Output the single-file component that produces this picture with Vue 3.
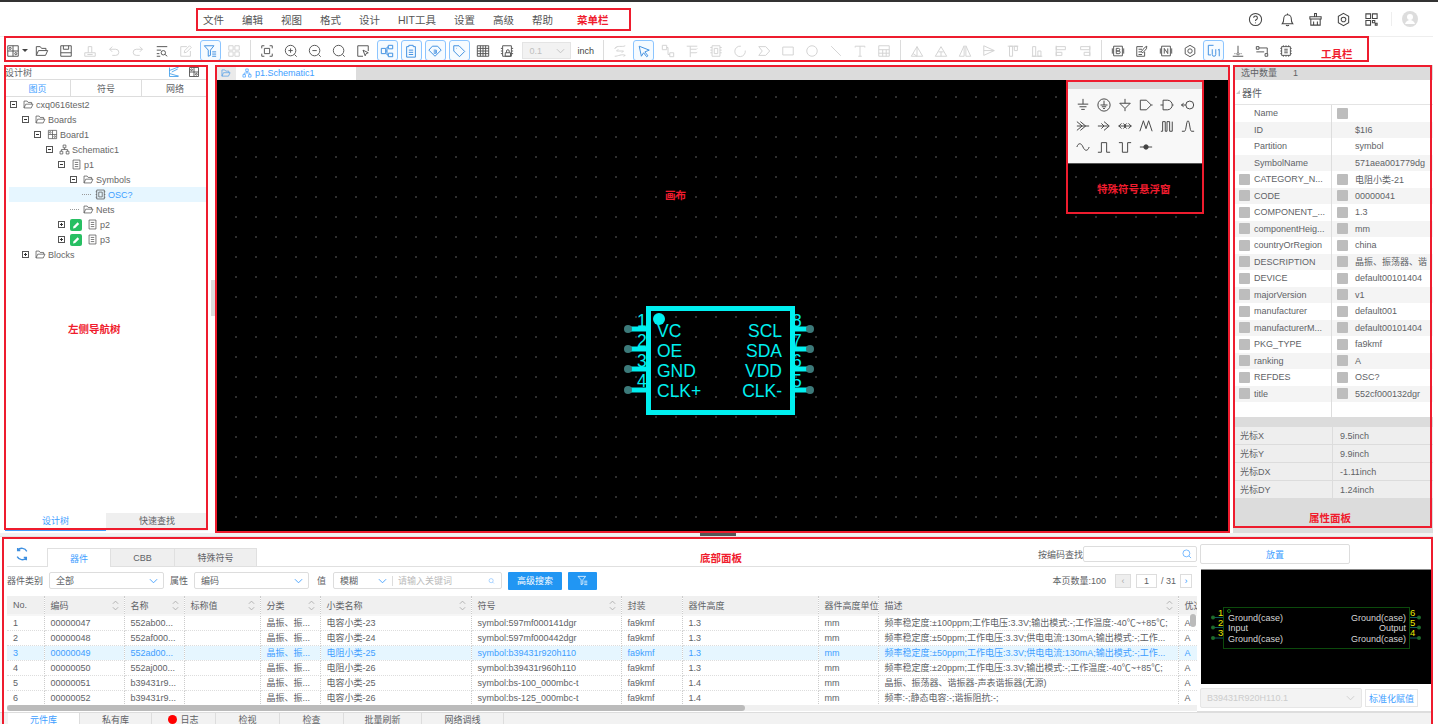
<template>
  <div class="page">
    <div class="app">
      <div class="menubar">
        <span v-for="m in menus" :key="m" class="menu-item">{{ m }}</span>
        <div class="menu-right">
          <Ic n="help" class="mr-ic" />
          <Ic n="bell" class="mr-ic" />
          <Ic n="clean" class="mr-ic" />
          <Ic n="gear" class="mr-ic" />
          <Ic n="apps" class="mr-ic" />
          <i class="mr-sep"></i>
          <div class="avatar">
            <svg viewBox="0 0 16 16"><circle cx="8" cy="6" r="3" /><path d="M3 13c1-3 3-4 5-4s4 1 5 4z" /></svg>
          </div>
        </div>
      </div>

      <div class="toolbar">
        <div class="combo"><Ic n="board" class="tb-ic" /><i class="caret"></i></div>
        <template v-for="(g, gi) in toolGroups" :key="gi">
          <div class="tb-group">
            <div v-for="(t, ti) in g" :key="ti" :class="['tb-btn', t[1]]">
              <Ic :n="t[0]" class="tb-ic" />
            </div>
          </div>
          <template v-if="gi === 1">
            <div class="tb-select"><span>0.1</span><svg viewBox="0 0 10 6"><path d="M1 1l4 4 4-4" /></svg></div>
            <span class="tb-unit">inch</span>
          </template>
          <i v-if="gi < toolGroups.length - 1" class="tb-sep"></i>
        </template>
      </div>

      <div class="main">
        <aside class="left">
          <div class="left-head">
            <span>设计树</span>
            <Ic n="treeLink" class="lh-ic blue" />
            <Ic n="board" class="lh-ic" />
          </div>
          <div class="left-tabs">
            <span class="on">图页</span>
            <span>符号</span>
            <span>网络</span>
          </div>
          <div class="tree">
            <div v-for="r in tree" :key="r.label" :class="['tree-row', { picked: r.picked }]" :style="{ paddingLeft: r.x + 'px' }">
              <i v-if="r.exp" :class="['exp', r.exp]"></i>
              <i v-else class="tree-line"></i>
              <span v-if="r.edit" class="edit-badge">
                <svg viewBox="0 0 12 12"><path d="M3 9.5l.6-2.2 4-4 1.6 1.6-4 4z" /></svg>
              </span>
              <Ic :n="r.icon" class="tree-ic" />
              <span class="tree-label">{{ r.label }}</span>
            </div>
          </div>
          <div class="left-foot">
            <span class="on">设计树</span>
            <span>快速查找</span>
          </div>
        </aside>

        <div class="gutter"><i class="handle"></i></div>

        <section class="center">
          <div class="doc-tabs">
            <div class="doc-folder"><Ic n="folder" class="doc-ic" /></div>
            <div class="doc-tab"><Ic n="schem" class="doc-ic" /><span>p1.Schematic1</span></div>
          </div>
          <div class="canvas">
            <svg class="chip" viewBox="0 0 220 130">
              <g class="chip-pins">
                <path v-for="y in [39, 59, 79, 100]" :key="'l' + y" :d="`M28 ${y}H50`" />
                <path v-for="y in [39, 59, 79, 100]" :key="'r' + y" :d="`M192 ${y}H210`" />
              </g>
              <g class="chip-ends">
                <circle v-for="y in [39, 59, 79, 100]" :key="'cl' + y" cx="28" :cy="y" r="4" />
                <circle v-for="y in [39, 59, 79, 100]" :key="'cr' + y" cx="210" :cy="y" r="4" />
              </g>
              <rect class="chip-body" x="48.5" y="18.5" width="144" height="104" />
              <circle class="chip-dot" cx="59" cy="29" r="6" />
              <g class="chip-text">
                <text v-for="(t, i) in ['1', '2', '3', '4']" :key="t" x="37" :y="37 + i * 20">{{ t }}</text>
                <text v-for="(t, i) in ['8', '7', '6', '5']" :key="t" x="192" :y="37 + i * 20">{{ t }}</text>
                <text v-for="(t, i) in ['VC', 'OE', 'GND', 'CLK+']" :key="t" x="57" :y="47 + i * 20">{{ t }}</text>
                <text v-for="(t, i) in ['SCL', 'SDA', 'VDD', 'CLK-']" :key="t" x="182" :y="47 + i * 20" text-anchor="end">{{ t }}</text>
              </g>
            </svg>
            <div class="float-win">
              <div class="float-head"></div>
              <div class="float-body">
                <Ic v-for="s in symbols" :key="s" :n="s" class="sym-ic" />
              </div>
            </div>
          </div>
        </section>

        <div class="gutter small"></div>

        <aside class="right">
          <div class="sel-count"><span>选中数量</span><span class="sel-num">1</span></div>
          <div class="prop-title"><i class="tri"></i>器件</div>
          <div class="prop-list">
            <div v-for="p in propRows" :key="p[0]" class="prop-row">
              <div class="prop-l"><i v-if="p[2]" class="chk"></i><span>{{ p[0] }}</span></div>
              <div class="prop-r"><i v-if="p[3]" class="chk"></i><span>{{ p[1] }}</span></div>
            </div>
            <div class="prop-fill"><div></div></div>
          </div>
          <div class="cursor-strip"></div>
          <div class="cursor-table">
            <div v-for="c in cursorRows" :key="c[0]" class="cursor-row">
              <span>{{ c[0] }}</span><span>{{ c[1] }}</span>
            </div>
          </div>
          <div class="right-fill"></div>
        </aside>
      </div>

      <div class="split"><i></i></div>

      <div class="bottom">
        <div class="lib">
          <div class="lib-col">
            <div class="lib-tabs">
              <Ic n="refresh" class="refresh" />
              <span class="lib-tab on">器件</span>
              <span class="lib-tab">CBB</span>
              <span class="lib-tab wide">特殊符号</span>
              <div class="find">
                <span>按编码查找</span>
                <div class="find-box"><Ic n="search" class="find-ic" /></div>
              </div>
            </div>

            <div class="filters">
              <span>器件类别</span>
              <div class="sel w115"><span>全部</span><svg viewBox="0 0 10 6"><path d="M1 1l4 4 4-4" /></svg></div>
              <span>属性</span>
              <div class="sel w115"><span>编码</span><svg viewBox="0 0 10 6"><path d="M1 1l4 4 4-4" /></svg></div>
              <span class="val">值</span>
              <div class="sel w170">
                <span class="mode">模糊</span>
                <svg viewBox="0 0 10 6"><path d="M1 1l4 4 4-4" /></svg>
                <i class="sel-sep"></i>
                <span class="ph">请输入关键词</span>
                <Ic n="search" class="find-ic" />
              </div>
              <div class="btn-blue">高级搜索</div>
              <div class="btn-blue icon"><Ic n="filter" class="btn-ic" /></div>
              <div class="pager">
                <span>本页数量:100</span>
                <i class="pg-btn off">‹</i>
                <i class="pg-num">1</i>
                <span class="pg-total">/ 31</span>
                <i class="pg-btn">›</i>
              </div>
            </div>

            <div class="table-wrap">
              <table>
                <colgroup>
                  <col v-for="c in columns" :key="c.t" :style="{ width: c.w + 'px' }" />
                </colgroup>
                <thead>
                  <tr>
                    <th v-for="c in columns" :key="c.t">
                      {{ c.t }}
                      <svg v-if="c.s" class="sort" viewBox="0 0 8 14"><path d="M1 5l3-3 3 3M1 9l3 3 3-3" /></svg>
                    </th>
                  </tr>
                </thead>
                <tbody>
                  <tr v-for="(r, i) in rows" :key="r[1]" :class="{ cur: i === 2 }">
                    <td v-for="(v, j) in r" :key="j">{{ v }}</td>
                  </tr>
                </tbody>
              </table>
              <i class="v-thumb"></i>
              <div class="h-track"><i></i></div>
            </div>
          </div>

          <div class="preview-col">
            <div class="place-btn">放置</div>
            <div class="preview">
              <svg viewBox="0 0 230 115">
                <rect class="pv-body" x="22.5" y="37.5" width="186" height="41" />
                <circle class="pv-o" cx="28" cy="41" r="1.5" />
                <g v-for="y in [47.5, 57.5, 68]" :key="y">
                  <path class="pv-pin" :d="`M12 ${y}H22M209 ${y}H218`" />
                  <circle class="pv-end" cx="12" :cy="y" r="2" />
                  <circle class="pv-end" cx="218" :cy="y" r="2" />
                </g>
                <g class="pv-num">
                  <text x="17" y="46">1</text><text x="17" y="56">2</text><text x="17" y="66">3</text>
                  <text x="209" y="46">6</text><text x="209" y="56">5</text><text x="209" y="66">4</text>
                </g>
                <g class="pv-text">
                  <text x="27" y="51">Ground(case)</text>
                  <text x="27" y="61">Input</text>
                  <text x="27" y="72">Ground(case)</text>
                  <text x="205" y="51" text-anchor="end">Ground(case)</text>
                  <text x="205" y="61" text-anchor="end">Output</text>
                  <text x="205" y="72" text-anchor="end">Ground(case)</text>
                </g>
              </svg>
            </div>
            <div class="pv-foot">
              <div class="pv-sel"><span>B39431R920H110.1</span><svg viewBox="0 0 10 6"><path d="M1 1l4 4 4-4" /></svg></div>
              <div class="pv-btn">标准化赋值</div>
            </div>
          </div>
        </div>

        <div class="foot-tabs">
          <span class="on">元件库</span>
          <span>私有库</span>
          <span><i class="dot"></i>日志</span>
          <span>检视</span>
          <span>检查</span>
          <span class="w78">批量刷新</span>
          <span class="w82">网络调线</span>
        </div>
      </div>
    </div>

    <!-- 标注 -->
    <i class="box b-menu"></i>
    <i class="box b-tool"></i>
    <i class="box b-left"></i>
    <i class="box b-canvas"></i>
    <i class="box b-float"></i>
    <i class="box b-right"></i>
    <i class="box b-bottom"></i>
    <span class="note n-menu">菜单栏</span>
    <span class="note n-tool">工具栏</span>
    <span class="note n-left">左侧导航树</span>
    <span class="note n-canvas">画布</span>
    <span class="note n-float">特殊符号悬浮窗</span>
    <span class="note n-right">属性面板</span>
    <span class="note n-bottom">底部面板</span>
  </div>
</template>

<script setup>
import { h } from 'vue'

const paths = {
  help: 'M8 1.5a6.5 6.5 0 1 0 0 13a6.5 6.5 0 1 0 0-13 M6 6.2a2 2 0 1 1 3 1.8c-.7.4-1 .8-1 1.6 M8 11.2v.8',
  bell: 'M2.5 12.5c1-1 1.5-2 1.5-5.5a4 4 0 0 1 8 0c0 3.5.5 4.5 1.5 5.5z M6.5 14c.5.8 2.5.8 3 0 M8 1.5v1.5',
  clean: 'M7 1.5h2v3.5H7z M2 5h12v2.5H2z M3 7.5V14h10V7.5 M6 10v4 M10 10v4',
  gear: 'M8 1.5l5.5 3.2v6.6L8 14.5l-5.5-3.2V4.7z M8 5.5a2.5 2.5 0 1 0 0 5a2.5 2.5 0 1 0 0-5',
  apps: 'M2 2h5v5H2z M9 2h5v5H9z M2 9h5v5H2z M9 9h2.5v2.5H9z M12 12h2v2h-2z',
  board: 'M2 2h12v12H2z M8 2v12 M2 8h12 M3.5 5a1.2 1.2 0 1 0 2.4 0a1.2 1.2 0 1 0-2.4 0 M10 11a1.2 1.2 0 1 0 2.4 0a1.2 1.2 0 1 0-2.4 0',
  folder: 'M1.5 13V3h4.5l1.5 2h5v2.5 M1.5 13l2.5-5.5h10.5L12 13z',
  save: 'M2 2h12v12H2z M5 2v4h6V2 M2 10h12',
  stamp: 'M2 14h12v-4H2z M6 10V3h4v7 M5 12h6',
  undo: 'M3 6h7a3.5 3.5 0 0 1 0 7H6 M3 6l3-3 M3 6l3 3',
  redo: 'M13 6H6a3.5 3.5 0 0 0 0 7h4 M13 6l-3-3 M13 6l-3 3',
  findList: 'M2 3h12 M2 7h5 M2 11h3 M2 14h4 M7 10a2.5 2.5 0 1 0 5 0a2.5 2.5 0 1 0-5 0 M11.5 12l2.5 2',
  editDoc: 'M13 8v6H2V3h7 M6 10l.5-2.5L12 2l2 2-5.5 5.5z',
  filter: 'M1.5 2h11L8.5 7v6L6 14V7z M10.5 9H15 M10.5 11.5H15 M10.5 14H15',
  grid4: 'M2 2h5v5H2z M9 2h5v5H9z M2 9h5v5H2z M9 9h5v5H9z',
  fit: 'M2 5V2h3 M11 2h3v3 M14 11v3h-3 M5 14H2v-3 M5 5h6v6H5z',
  zoomIn: 'M7.5 1.5a6 6 0 1 0 0 12a6 6 0 1 0 0-12 M12 12l2.5 2.5 M5 7.5h5 M7.5 5v5',
  zoomOut: 'M7.5 1.5a6 6 0 1 0 0 12a6 6 0 1 0 0-12 M12 12l2.5 2.5 M5 7.5h5',
  zoom: 'M7.5 1.5a6 6 0 1 0 0 12a6 6 0 1 0 0-12 M12 12l2.5 2.5',
  areaSel: 'M14 8V2H2v12h6 M8 7l6 3-2.5 1-1 2.5z',
  hier: 'M1.5 5h5v6h-5z M9.5 1.5h5v4h-5z M9.5 10.5h5v4h-5z M6.5 8H8 M8 3.5V12.5 M8 3.5h1.5 M8 12.5h1.5',
  clip: 'M3 3h2.5V1.5h5V3H13v12H3z M5.5 7h5 M5.5 9.5h5 M5.5 12h5',
  tagS: 'M5 2.5h6L15 7l-7 7-7-7z M6.5 7h3v2h-3 M9.5 9v1.5h-3',
  tag: 'M2 2h6l6.5 6.5-6 6L2 8z M5 5h.5',
  table: 'M1.5 2h13v12h-13z M1.5 5h13 M1.5 8h13 M1.5 11h13 M5 2v12 M8 2v12 M11 2v12',
  chipLock: 'M3 2h10v12H3z M1 5h2 M1 8h2 M1 11h2 M13 5h2 M13 8h2 M13 11h2 M6 10h6v4H6z M7.5 10V8a1.5 1.5 0 0 1 3 0v2',
  route: 'M2 5c3-4 8-1 12-3 M2 14c4 0 8-3 12-1 M4 8h8 M4 8l2-2 M12 8l-2 2 M2 5l2-1 M14 13l-2 1',
  cursor: 'M2.5 2.5L14 7l-5 2 3.5 4.5-1.5 1L7.5 10 5 14z',
  conn: 'M1.5 1.5h5v5h-5z M10 10h4.5v4.5H10z M6.5 4H8v8h2',
  bus: 'M2 2.5h12 M6 2.5V15 M6 6h7 M6 10h7 M13 6l1-1 M13 10l1-1',
  chipSq: 'M3.5 2h9v12h-9z M6 5h4v6H6z M1.5 4h2 M1.5 7h2 M1.5 10h2 M12.5 4h2 M12.5 7h2 M12.5 10h2',
  arc: 'M9 2.5a6 6 0 1 0 5 5',
  port: 'M2 3h8l4.5 5-4.5 5H2l4-5z',
  rect: 'M2 3.5h12v9H2z',
  circle: 'M8 2a6 6 0 1 0 0 12a6 6 0 1 0 0-12',
  line: 'M2.5 2.5l11 11',
  tee: 'M2.5 4V2.5h11V4 M8 2.5V14 M6 14h4',
  tableS: 'M2 2h12v12H2z M2 6.5h12 M2 10.5h12 M6.5 6.5V14 M10.5 6.5V14',
  al1: 'M1.5 14L8 3l6.5 11z M8 3v11 M3.5 11l4.5 3',
  al2: 'M1.5 14L8 3l6.5 11z M5 9h6 M8 14v-5',
  al3: 'M7 2v12L1.5 14z M9 2v12l5.5 0z',
  al4: 'M2 2l12 5.5L2 13z M2 7.5h12',
  al5: 'M2 2.5h12 M4 2.5h3.5V14H4z M9.5 2.5H13v5H9.5z',
  al6: 'M2 14h12 M3 3h3.5v11H3z M9 8h3.5v6H9z',
  al7: 'M2.5 2v12 M2.5 3H13v3.5H2.5z M2.5 9.5H9V13H2.5z',
  al8: 'M13.5 2v12 M13.5 3H3v3.5h10.5z M13.5 9.5H7V13h6.5z',
  docB: 'M3 2.5h10v11H3z M1.5 5v6 M14.5 5v6 M6 5h2.5a1.2 1.2 0 0 1 0 3H6z M6 8h3a1.3 1.3 0 0 1 0 3H6z',
  docEdit: 'M11 9v5H2V3h7 M4 6h4 M4 9h3 M4 12h4 M7 9l4-5 2.5-1.5L13 5.5l-4 4.5z',
  docN: 'M3 2.5h10v11H3z M1.5 5v6 M14.5 5v6 M6 11V5l4 6V5',
  uOne: 'M1.5 1.5h6M1.5 1.5v11h3 M6 6v6a2 2 0 0 0 4 0V6 M12.5 7l1.5-1v8',
  pinDown: 'M8 2v8 M2 14h12 M4 11h1 M11 11h1 M8 10a1.3 1.3 0 1 0 .1 0',
  wires: 'M1.5 3h3v3h-3z M4.5 4.5H14V11 M11.5 11h3v3h-3z M1.5 9h9',
  chipDash: 'M3 3h10v10H3z M1.5 5h1.5 M1.5 8h1.5 M1.5 11h1.5 M13 5h1.5 M13 8h1.5 M13 11h1.5 M5 1.5V3 M8 1.5V3 M11 1.5V3 M5 13v1.5 M8 13v1.5 M11 13v1.5 M6 6h4 M6 8h4 M6 10h4',
  treeLink: 'M2 2v12h12 M2 6l10-4 M2 10l10 3 M5 8l8-4 M12 2h2 M12 13h2',
  schem: 'M6 1.5h4v4H6z M1.5 10.5h4v4h-4z M10.5 10.5h4v4h-4z M8 5.5V8 M3.5 10.5V8h9v2.5',
  doc: 'M3 1.5h10v13H3z M5.5 5h5 M5.5 8h5 M5.5 11h5',
  chipDoc: 'M2.5 1.5h11v13h-11z M5.5 4.5h5v7h-5z M1 4h1.5 M1 8h1.5 M1 12h1.5 M13.5 4H15 M13.5 8H15 M13.5 12H15',
  search: 'M7 1.5a5.5 5.5 0 1 0 0 11a5.5 5.5 0 1 0 0-11 M11 11l3.5 3.5',
  refresh: 'M13.5 5A6.5 6.5 0 0 0 3 3.5 M2.5 11a6.5 6.5 0 0 0 10.5 1.5 M3 1v3h3 M13 15v-3h-3',
  s1: 'M8 1v6 M2 7h12 M4 10h8 M6 13h4',
  s2: 'M8 1a7 7 0 1 0 0 14a7 7 0 1 0 0-14 M8 3v5 M4 8h8 M5.5 10h5 M7 12h2',
  s3: 'M8 1v5 M2 6h12L8 12z M8 12v3',
  s4: 'M1.5 2.5h7L14 8l-5.5 5.5h-7z M14 8h1.5',
  s5: 'M3.5 2.5h5a5.5 5.5 0 0 1 0 11h-5z M.5 8h3 M14 8h1.5',
  s6: 'M10 3.5a4.5 4.5 0 1 0 0 9a4.5 4.5 0 1 0 0-9 M.5 8h5 M3 6L.5 8 3 10',
  s7: 'M1 3l6 5-6 5 M5 3l6 5-6 5 M1 8h14',
  s8: 'M1 8h12 M8 3l6 5-6 5 M5 5l3 3-3 3',
  s9: 'M.5 8h15 M4 5L1 8l3 3 M12 5l3 3-3 3 M6 5l3 3-3 3 M10 5L7 8l3 3',
  s10: 'M1 14L5 2l3 9 3-9 4 12',
  s11: 'M1 14h2V3h3v11h2V3h3v11h3V3',
  s12: 'M1 14h3c2 0 2-12 4-12s2 12 4 12h3',
  s13: 'M1 8c1.5-5 5-5 7 0s5.5 5 7 0',
  s14: 'M1 14h4V3h6v11h4',
  s15: 'M1 3h4v11h6V3h4',
  s16: 'M1 8h14 M5.5 8a2.5 2.5 0 1 0 5 0a2.5 2.5 0 1 0-5 0'
}

// маленькая обёртка для иконок
const Ic = (p) => h('svg', { viewBox: '0 0 16 16', class: 'ic' }, [h('path', { d: paths[p.n] })])
Ic.props = ['n']

const menus = ['文件', '编辑', '视图', '格式', '设计', 'HIT工具', '设置', '高级', '帮助']

const toolGroups = [
  [['folder'], ['save'], ['stamp', 'dis'], ['undo', 'dis'], ['redo', 'dis'], ['findList'], ['editDoc', 'dis'], ['filter', 'act'], ['grid4', 'dis']],
  [['fit'], ['zoomIn'], ['zoomOut'], ['zoom'], ['areaSel'], ['hier', 'act'], ['clip', 'act'], ['tagS', 'act'], ['tag', 'act'], ['table'], ['chipLock']],
  [['route', 'dis'], ['cursor', 'act'], ['conn', 'dis'], ['bus', 'dis'], ['chipSq', 'dis'], ['arc', 'dis'], ['port', 'dis'], ['rect', 'dis'], ['circle', 'dis'], ['line', 'dis'], ['tee', 'dis'], ['tableS', 'dis']],
  [['al1', 'dis'], ['al2', 'dis'], ['al3', 'dis'], ['al4', 'dis'], ['al5', 'dis'], ['al6', 'dis'], ['al7', 'dis'], ['al8', 'dis']],
  [['docB'], ['docEdit'], ['docN'], ['gear'], ['uOne', 'act'], ['pinDown'], ['wires'], ['chipDash']]
]

const tree = [
  { label: 'cxq0616test2', x: 10, exp: 'minus', icon: 'folder' },
  { label: 'Boards', x: 22, exp: 'minus', icon: 'folder' },
  { label: 'Board1', x: 34, exp: 'minus', icon: 'board' },
  { label: 'Schematic1', x: 46, exp: 'minus', icon: 'schem' },
  { label: 'p1', x: 58, exp: 'minus', icon: 'doc' },
  { label: 'Symbols', x: 70, exp: 'minus', icon: 'folder' },
  { label: 'OSC?', x: 82, icon: 'chipDoc', picked: true },
  { label: 'Nets', x: 70, icon: 'folder' },
  { label: 'p2', x: 58, exp: 'plus', icon: 'doc', edit: true },
  { label: 'p3', x: 58, exp: 'plus', icon: 'doc', edit: true },
  { label: 'Blocks', x: 22, exp: 'plus', icon: 'folder' }
]

const symbols = ['s1', 's2', 's3', 's4', 's5', 's6', 's7', 's8', 's9', 's10', 's11', 's12', 's13', 's14', 's15', 's16']

const propRows = [
  ['Name', '', false, true],
  ['ID', '$1I6', false, false],
  ['Partition', 'symbol', false, false],
  ['SymbolName', '571aea001779dg', false, false],
  ['CATEGORY_N...', '电阻小类-21', true, true],
  ['CODE', '00000041', true, true],
  ['COMPONENT_...', '1.3', true, true],
  ['componentHeig...', 'mm', true, true],
  ['countryOrRegion', 'china', true, true],
  ['DESCRIPTION', '晶振、振荡器、谐', true, true],
  ['DEVICE', 'default00101404', true, true],
  ['majorVersion', 'v1', true, true],
  ['manufacturer', 'default001', true, true],
  ['manufacturerM...', 'default00101404', true, true],
  ['PKG_TYPE', 'fa9kmf', true, true],
  ['ranking', 'A', true, true],
  ['REFDES', 'OSC?', true, true],
  ['title', '552cf000132dgr', true, true]
]

const cursorRows = [
  ['光标X', '9.5inch'],
  ['光标Y', '9.9inch'],
  ['光标DX', '-1.11inch'],
  ['光标DY', '1.24inch']
]

const columns = [
  { t: 'No.', w: 37 },
  { t: '编码', w: 80, s: true },
  { t: '名称', w: 60, s: true },
  { t: '标称值', w: 76, s: true },
  { t: '分类', w: 60, s: true },
  { t: '小类名称', w: 151, s: true },
  { t: '符号', w: 150, s: true },
  { t: '封装', w: 61 },
  { t: '器件高度', w: 136 },
  { t: '器件高度单位', w: 60 },
  { t: '描述', w: 300, s: true },
  { t: '优选', w: 30 }
]

const descA = '频率稳定度:±50ppm;工作电压:3.3V;供电电流:130mA;输出模式:-;工作...'
const rows = [
  ['1', '00000047', '552ab00...', '', '晶振、振...', '电容小类-23', 'symbol:597mf000141dgr', 'fa9kmf', '1.3', 'mm', '频率稳定度:±100ppm;工作电压:3.3V;输出模式:-;工作温度:-40℃~+85℃;', 'A'],
  ['2', '00000048', '552af000...', '', '晶振、振...', '电容小类-24', 'symbol:597mf000442dgr', 'fa9kmf', '1.3', 'mm', descA, 'A'],
  ['3', '00000049', '552ad00...', '', '晶振、振...', '电阻小类-25', 'symbol:b39431r920h110', 'fa9kmf', '1.3', 'mm', descA, 'A'],
  ['4', '00000050', '552aj000...', '', '晶振、振...', '电阻小类-26', 'symbol:b39431r960h110', 'fa9kmf', '1.3', 'mm', '频率稳定度:±20ppm;工作电压:3.3V;输出模式:-;工作温度:-40℃~+85℃;', 'A'],
  ['5', '00000051', 'b39431r9...', '', '晶振、振...', '电容小类-25', 'symbol:bs-100_000mbc-t', 'fa9kmf', '1.4', 'mm', '晶振、振荡器、谐振器-声表谐振器(无源)', 'A'],
  ['6', '00000052', 'b39431r9...', '', '晶振、振...', '电容小类-26', 'symbol:bs-125_000mbc-t', 'fa9kmf', '1.4', 'mm', '频率:-;静态电容:-;谐振阻抗:-;', 'A']
]
</script>

<style>
html, body {
  margin: 0;
  background: #fff;
  overflow: hidden;
}
</style>

<style scoped>
.page {
  position: relative;
  width: 1438px;
  height: 724px;
  overflow: hidden;
  background: #fff;
  border-top: 2px solid #333;
  box-sizing: border-box;
  font-family: "Liberation Sans", "Noto Sans CJK SC", sans-serif;
  font-size: 9px;
  color: #606266;
}

i {
  font-style: normal;
}

.app {
  width: 1433px;
  height: 722px;
  display: flex;
  flex-direction: column;
}

.ic {
  fill: none;
  stroke: currentColor;
  stroke-width: 1.1;
  display: block;
}

/* меню */
.menubar {
  height: 34px;
  flex: none;
  display: flex;
  align-items: center;
  padding: 0 15px 0 203px;
  font-size: 10.5px;
  color: #555;
}

.menu-item {
  margin-right: 18px;
}

.menu-right {
  margin-left: auto;
  display: flex;
  align-items: center;
  color: #444;
}

.mr-ic {
  width: 15px;
  height: 15px;
  margin-left: 13px;
}

.mr-ic:first-child {
  margin-right: 4px;
}

.mr-sep {
  width: 1px;
  height: 14px;
  background: #eee;
  margin: 0 10px 0 12px;
}

.avatar {
  width: 16px;
  height: 16px;
  border-radius: 50%;
  background: #ddd;
  overflow: hidden;
}

.avatar svg {
  display: block;
  fill: #fff;
}

/* тулбар */
.toolbar {
  height: 28px;
  flex: none;
  display: flex;
  align-items: center;
  border-top: 1px solid #eee;
  box-sizing: border-box;
  color: #555;
}

.combo {
  width: 23px;
  margin: 0 2.5px 0 6px;
  display: flex;
  align-items: center;
}

.caret {
  width: 0;
  height: 0;
  margin-left: 2px;
  border: 3px solid transparent;
  border-top: 3px solid #444;
  border-bottom: 0;
}

.tb-group {
  display: flex;
  gap: 3px;
}

.tb-btn {
  width: 21px;
  height: 21px;
  box-sizing: border-box;
  border: 1px solid transparent;
  border-radius: 3px;
  display: flex;
  align-items: center;
  justify-content: center;
}

.tb-btn.dis {
  color: #d2d2d2;
}

.tb-btn.act {
  border-color: #8cc5ff;
  background: #f6fbff;
  color: #3d8fe0;
}

.tb-ic {
  width: 14px;
  height: 14px;
}

.tb-sep {
  width: 1px;
  height: 21px;
  background: #dcdcdc;
  margin: 0 5.5px;
}

.tb-select {
  width: 49px;
  height: 17px;
  margin-left: 4px;
  padding: 0 5px 0 7px;
  box-sizing: border-box;
  display: flex;
  align-items: center;
  justify-content: space-between;
  background: #f2f2f2;
  border: 1px solid #e4e4e4;
  color: #c0c0c0;
}

.tb-select svg {
  width: 9px;
  height: 6px;
  fill: none;
  stroke: #c0c0c0;
}

.tb-unit {
  width: 16px;
  margin: 0 3.5px 0 7px;
  color: #444;
}

/* основная область */
.main {
  flex: 1;
  min-height: 0;
  display: flex;
  padding-top: 1px;
}

.left {
  width: 208px;
  flex: none;
  padding: 0 0 4px 5px;
  box-sizing: border-box;
  display: flex;
  flex-direction: column;
}

.left-head {
  height: 14px;
  flex: none;
  display: flex;
  align-items: center;
}

.left-head span {
  flex: 1;
}

.lh-ic {
  width: 12px;
  height: 12px;
  margin-right: 8px;
  color: #444;
}

.lh-ic.blue {
  color: #3d9be9;
}

.left-tabs {
  height: 18px;
  flex: none;
  display: grid;
  grid-template-columns: 65px 71px 1fr;
  border-top: 1px solid #ddd;
  border-bottom: 1px solid #ddd;
  box-sizing: border-box;
}

.left-tabs span {
  display: flex;
  align-items: center;
  justify-content: center;
  border-left: 1px solid #ddd;
}

.left-tabs span:first-child {
  border-left: 0;
}

.left-tabs .on {
  color: #409eff;
}

.tree {
  flex: 1;
  color: #666;
}

.tree-row {
  position: relative;
  height: 15px;
  display: flex;
  align-items: center;
  margin-left: -5px;
}

.tree-row.picked {
  color: #409eff;
}

.tree-row.picked::before {
  content: "";
  position: absolute;
  left: 9px;
  right: 0;
  top: 0;
  bottom: 0;
  background: #e6f6ff;
}

.tree-row > * {
  position: relative;
}

.exp {
  width: 7px;
  height: 7px;
  flex: none;
  margin-right: 5.5px;
  box-sizing: border-box;
  border: 1px solid #555;
  background: linear-gradient(#333, #333) center / 3px 1px no-repeat #fff;
}

.exp::before {
  content: "";
  position: absolute;
  left: 2px;
  top: -5px;
  height: 15px;
  border-left: 1px dotted #aaa;
  z-index: -1;
}

.exp.plus {
  background:
    linear-gradient(#333, #333) center / 3px 1px no-repeat,
    linear-gradient(#333, #333) center / 1px 3px no-repeat,
    #fff;
}

.tree-line {
  width: 9px;
  height: 1px;
  flex: none;
  margin-right: 3.5px;
  border-top: 1px dotted #999;
}

.tree-ic {
  width: 11px;
  height: 11px;
  flex: none;
  margin-right: 2.5px;
  color: #555;
}

.tree-label {
  white-space: nowrap;
}

.edit-badge {
  width: 12px;
  height: 12px;
  flex: none;
  margin: 0 4.5px 0 -.5px;
  background: #27bf63;
  border-radius: 2px;
}

.edit-badge svg {
  display: block;
  fill: #fff;
}

.left-foot {
  height: 16px;
  flex: none;
  display: grid;
  grid-template-columns: 101px 1fr;
  text-align: center;
  line-height: 16px;
}

.left-foot span {
  background: #efefef;
}

.left-foot .on {
  background: #fff;
  color: #409eff;
  border-bottom: 2px solid #409eff;
}

.gutter {
  width: 7px;
  flex: none;
  position: relative;
}

.gutter.small {
  width: 3px;
}

.handle {
  position: absolute;
  left: 3px;
  top: 215px;
  width: 4px;
  height: 36px;
  background: #dcdcdc;
}

.center {
  flex: 1;
  min-width: 0;
  display: flex;
  flex-direction: column;
  padding-bottom: 2px;
}

.doc-tabs {
  height: 15px;
  flex: none;
  display: flex;
  background: #dcdcdc;
}

.doc-folder {
  width: 21px;
  display: flex;
  align-items: center;
  justify-content: center;
  background: #eaeaea;
  color: #4a9ae8;
}

.doc-tab {
  width: 120px;
  background: #fff;
  display: flex;
  align-items: center;
  gap: 3px;
  padding-left: 6px;
  box-sizing: border-box;
  color: #409eff;
}

.doc-ic {
  width: 10px;
  height: 10px;
}

.canvas {
  position: relative;
  flex: 1;
  background-color: #000;
  background-image: radial-gradient(circle at center, #4a4a4a 0.6px, transparent 0.9px);
  background-size: 20px 20px;
  background-position: -9px 7px;
}

.chip {
  position: absolute;
  left: 385px;
  top: 210px;
  width: 220px;
  height: 130px;
}

.chip-pins path {
  stroke: #00f0f0;
  stroke-width: 5;
}

.chip-ends circle {
  fill: #3c7a7a;
}

.chip-body {
  fill: none;
  stroke: #00f0f0;
  stroke-width: 5;
}

.chip-dot {
  fill: #00f0f0;
}

.chip-text text {
  fill: #00f0f0;
  font-size: 17.5px;
}

.float-win {
  position: absolute;
  left: 853px;
  top: 1px;
  width: 134px;
  height: 83px;
  background: #f8f8f8;
  border-bottom: 1px solid #555;
  box-sizing: border-box;
}

.float-head {
  height: 8px;
  background: #d9d9d9;
}

.float-body {
  display: grid;
  grid-template-columns: repeat(6, 21px);
  grid-auto-rows: 21px;
  padding: 6px 0 0 5px;
  color: #444;
}

.sym-ic {
  width: 14px;
  height: 14px;
  margin: 3px;
}

.sym-ic:last-child {
  fill: currentColor;
}

/* свойства */
.right {
  width: 200px;
  flex: none;
  display: flex;
  flex-direction: column;
}

.sel-count {
  height: 15px;
  flex: none;
  background: #dcdcdc;
  display: flex;
  align-items: center;
  padding-left: 8px;
}

.sel-num {
  margin-left: 16px;
}

.prop-title {
  height: 24px;
  flex: none;
  display: flex;
  align-items: center;
  padding-left: 3px;
  gap: 2px;
  font-size: 10px;
}

.tri {
  width: 0;
  height: 0;
  border-left: 4px solid transparent;
  border-bottom: 4px solid #ccc;
}

.prop-list {
  flex: 1;
  min-height: 0;
  display: flex;
  flex-direction: column;
  border-top: 1px solid #e4e4e4;
}

.prop-row {
  height: 16.5px;
  flex: none;
  display: flex;
}

.prop-row:nth-child(even) {
  background: #f4f4f4;
}

.prop-l {
  width: 99px;
  flex: none;
  display: flex;
  align-items: center;
  padding-left: 21px;
  position: relative;
  box-sizing: border-box;
  border-right: 1px solid #ddd;
  white-space: nowrap;
}

.prop-r {
  flex: 1;
  min-width: 0;
  display: flex;
  align-items: center;
  padding-left: 23px;
  position: relative;
  white-space: nowrap;
  overflow: hidden;
}

.chk {
  position: absolute;
  left: 6px;
  top: 2.5px;
  width: 11px;
  height: 11px;
  border-radius: 1px;
  background: #bdbdbd;
}

.prop-r .chk {
  left: 5px;
}

.prop-fill {
  flex: 1;
}

.prop-fill div {
  width: 99px;
  height: 100%;
  box-sizing: border-box;
  border-right: 1px solid #ddd;
}

.cursor-strip {
  height: 9px;
  flex: none;
  background: #dcdcdc;
}

.cursor-table {
  flex: none;
  background: #eee;
}

.cursor-row {
  height: 18px;
  box-sizing: border-box;
  display: flex;
  align-items: center;
  border-top: 1px solid #dcdcdc;
}

.cursor-row span:first-child {
  width: 100px;
  height: 100%;
  flex: none;
  padding-left: 7px;
  box-sizing: border-box;
  display: flex;
  align-items: center;
  border-right: 1px solid #dcdcdc;
}

.cursor-row span:last-child {
  padding-left: 7px;
}

.right-fill {
  height: 35px;
  flex: none;
  background: #dcdcdc;
}

.split {
  height: 4px;
  flex: none;
  position: relative;
  background: #f2f2f2;
  border-bottom: 1px solid #e4e4e4;
  box-sizing: border-box;
}

.split i {
  position: absolute;
  left: 700px;
  width: 36px;
  height: 3px;
  background: #555;
}

/* нижняя панель */
.bottom {
  height: 187px;
  flex: none;
  display: flex;
  flex-direction: column;
}

.lib {
  height: 175px;
  flex: none;
  display: flex;
}

.lib-col {
  width: 1197px;
  flex: none;
  padding-left: 7px;
  box-sizing: border-box;
  display: flex;
  flex-direction: column;
  overflow: hidden;
}

.lib-tabs {
  height: 30px;
  flex: none;
  display: flex;
  align-items: flex-end;
  border-bottom: 1px solid #e0e0e0;
  box-sizing: border-box;
  position: relative;
}

.refresh {
  width: 14px;
  height: 14px;
  color: #3d8fe0;
  margin: 0 18px 5px 8px;
  stroke-width: 1.5;
}

.lib-tab {
  width: 64px;
  height: 18px;
  box-sizing: border-box;
  display: flex;
  align-items: center;
  justify-content: center;
  background: #efefef;
  border: 1px solid #e0e0e0;
  border-left: 0;
  border-bottom: 0;
}

.lib-tab.on {
  background: #fff;
  color: #409eff;
  margin-bottom: -1px;
  height: 19px;
  border-left: 1px solid #e0e0e0;
}

.lib-tab.wide {
  width: 82px;
}

.find {
  margin-left: auto;
  margin-bottom: 4px;
  display: flex;
  align-items: center;
}

.find-box {
  width: 114px;
  height: 16px;
  box-sizing: border-box;
  border: 1px solid #ddd;
  border-radius: 2px;
  display: flex;
  align-items: center;
  justify-content: flex-end;
  padding-right: 4px;
}

.find-ic {
  width: 10px;
  height: 10px;
  color: #409eff;
  flex: none;
}

.filters {
  height: 17px;
  flex: none;
  margin-top: 5px;
  display: flex;
  align-items: center;
  white-space: nowrap;
}

.sel {
  height: 17px;
  box-sizing: border-box;
  border: 1px solid #ddd;
  border-radius: 2px;
  display: flex;
  align-items: center;
  padding: 0 5px 0 6px;
  margin: 0 6px;
}

.sel svg {
  width: 9px;
  height: 6px;
  fill: none;
  stroke: #409eff;
  flex: none;
  margin-left: auto;
}

.w115 {
  width: 115px;
}

.w170 {
  width: 169px;
  margin: 0 6px 0 7px;
}

.val {
  margin-left: 2px;
}

.w170 svg {
  margin-left: 20px;
}

.sel-sep {
  width: 1px;
  height: 10px;
  background: #ddd;
  margin: 0 5px;
}

.ph {
  color: #bbb;
  flex: 1;
}

.btn-blue {
  width: 54px;
  height: 18px;
  background: #2196f3;
  color: #fff;
  display: flex;
  align-items: center;
  justify-content: center;
  border-radius: 1px;
}

.btn-blue.icon {
  width: 29px;
  margin-left: 6px;
}

.btn-ic {
  width: 11px;
  height: 11px;
}

.pager {
  margin-left: auto;
  margin-right: 5px;
  display: flex;
  align-items: center;
  gap: 5px;
}

.pg-btn {
  width: 12px;
  height: 14px;
  box-sizing: border-box;
  border: 1px solid #ddd;
  display: flex;
  align-items: center;
  justify-content: center;
  color: #409eff;
}

.pg-btn.off {
  width: 16px;
  background: #eee;
  color: #aaa;
  margin-left: 4px;
}

.pg-num {
  width: 21px;
  height: 14px;
  box-sizing: border-box;
  border: 1px solid #ddd;
  text-align: center;
  line-height: 12px;
}

.pg-total {
  margin: 0 -1px;
}

.table-wrap {
  position: relative;
  height: 115px;
  flex: none;
  margin-top: 7px;
  overflow: hidden;
}

table {
  width: 1201px;
  table-layout: fixed;
  border-collapse: collapse;
  font-size: 9px;
}

th {
  height: 19px;
  box-sizing: border-box;
  padding: 0 0 0 6px;
  background: #f0f0f0;
  font-weight: normal;
  text-align: left;
  position: relative;
  border-right: 1px dotted #ccc;
  border-bottom: 2px solid #f6f6f6;
  overflow: hidden;
  white-space: nowrap;
}

td {
  height: 15px;
  padding: 0 0 1px 6px;
  box-sizing: border-box;
  border-right: 1px dotted #ccc;
  border-bottom: 1px dotted #ddd;
  overflow: hidden;
  white-space: nowrap;
}

tr.cur td {
  background: #e6f6ff;
  color: #409eff;
}

.sort {
  position: absolute;
  right: 5px;
  top: 3px;
  width: 7px;
  height: 13px;
  fill: none;
  stroke: #aaa;
}

.v-thumb {
  position: absolute;
  right: 1px;
  top: 18px;
  width: 6px;
  height: 13px;
  border-radius: 3px;
  background: #bbb;
}

.h-track {
  position: absolute;
  left: 0;
  right: 0;
  bottom: 0;
  height: 6px;
  background: #f0f0f0;
}

.h-track i {
  display: block;
  width: 738px;
  height: 6px;
  border-radius: 3px;
  background: #bbb;
}

.preview-col {
  flex: 1;
  min-width: 0;
  padding: 7px 0 0 3px;
  display: flex;
  flex-direction: column;
  border-bottom: 1px solid #ddd;
}

.place-btn {
  width: 150px;
  height: 20px;
  flex: none;
  box-sizing: border-box;
  border: 1px solid #ddd;
  border-radius: 2px;
  display: flex;
  align-items: center;
  justify-content: center;
  color: #409eff;
}

.preview {
  width: 230px;
  height: 115px;
  flex: none;
  margin: 5px 0 0 1px;
  background: #000;
  border-top: 1px solid #888;
  box-sizing: border-box;
}

.preview svg {
  display: block;
  width: 230px;
  height: 115px;
}

.pv-body {
  fill: none;
  stroke: #0c4a0c;
}

.pv-o {
  fill: none;
  stroke: #1a7a1a;
}

.pv-pin {
  stroke: #0d5a5a;
}

.pv-end {
  fill: #1e6b2a;
}

.pv-num text {
  fill: #e8e800;
  font-size: 9.5px;
}

.pv-text text {
  fill: #d5d5d5;
  font-size: 9px;
}

.pv-foot {
  display: flex;
  align-items: center;
  margin-top: 4px;
  gap: 3px;
}

.pv-sel {
  width: 162px;
  height: 20px;
  box-sizing: border-box;
  background: #f3f3f3;
  border: 1px solid #e6e6e6;
  border-radius: 2px;
  display: flex;
  align-items: center;
  justify-content: space-between;
  padding: 0 6px;
  color: #ccc;
}

.pv-sel svg {
  width: 9px;
  height: 6px;
  fill: none;
  stroke: #ccc;
}

.pv-btn {
  width: 53px;
  height: 18px;
  box-sizing: border-box;
  border: 1px solid #e6e6e6;
  display: flex;
  align-items: center;
  justify-content: center;
  color: #409eff;
  white-space: nowrap;
}

.foot-tabs {
  flex: 1;
  display: flex;
  background: #f2f2f2;
  border-top: 1px solid #ddd;
  padding-left: 8px;
  box-sizing: border-box;
}

.foot-tabs span {
  width: 64px;
  box-sizing: border-box;
  display: flex;
  align-items: center;
  justify-content: center;
  border-right: 1px solid #ddd;
  white-space: nowrap;
}

.foot-tabs span.on {
  width: 72px;
  background: #fff;
  color: #409eff;
}

.foot-tabs span:nth-child(2) {
  width: 72px;
}

.foot-tabs .w78 {
  width: 78px;
}

.foot-tabs .w82 {
  width: 82px;
}

.dot {
  width: 9px;
  height: 9px;
  border-radius: 50%;
  background: #f00;
  margin-right: 3px;
}

/* красные рамки-подписи поверх интерфейса */
.box {
  position: absolute;
  box-sizing: border-box;
  border: 2px solid #ee1c2e;
  pointer-events: none;
}

.b-menu { left: 196px; top: 6px; width: 435px; height: 23px; }
.b-tool { left: 4px; top: 34px; width: 1365px; height: 26px; }
.b-left { left: 4px; top: 63px; width: 204px; height: 465px; }
.b-canvas { left: 215px; top: 63px; width: 1015px; height: 468px; }
.b-float { left: 1066px; top: 78px; width: 138px; height: 134px; }
.b-right { left: 1233px; top: 63px; width: 199px; height: 463px; }
.b-bottom { left: 2px; top: 535px; width: 1431px; height: 190px; }

.note {
  position: absolute;
  color: #f01c2e;
  font-size: 10.5px;
  font-weight: bold;
  white-space: nowrap;
}

.n-menu { left: 577px; top: 10px; }
.n-tool { left: 1321px; top: 44px; }
.n-left { left: 68px; top: 319px; }
.n-canvas { left: 665px; top: 185px; }
.n-float { left: 1097px; top: 179px; }
.n-right { left: 1309px; top: 508px; }
.n-bottom { left: 700px; top: 548px; }
</style>
